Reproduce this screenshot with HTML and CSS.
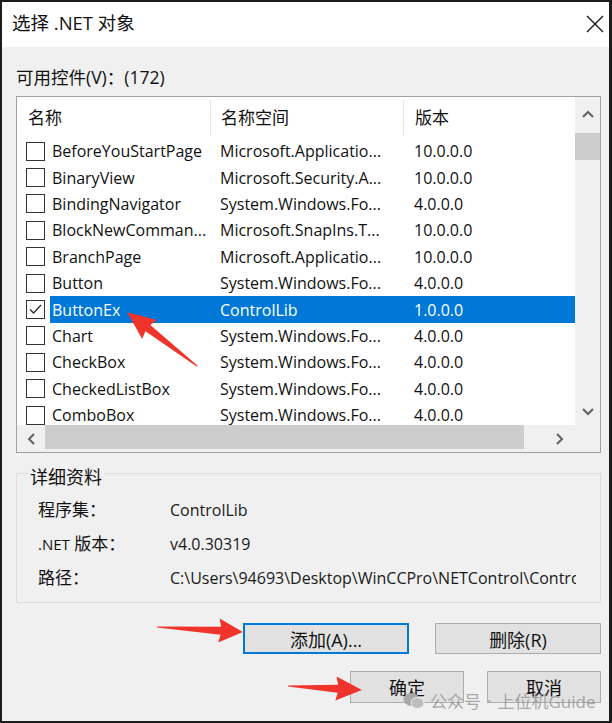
FILE: index.html
```html
<!DOCTYPE html>
<html lang="zh-CN">
<head>
    <meta charset="UTF-8">
    <meta name="viewport" content="width=device-width, initial-scale=1.0">
    <title>选择 .NET 对象</title>
    <link rel="stylesheet" href="styles.css">
</head>
<body>
    <div class="window">
        <div class="titlebar">
            <span class="title">选择 .NET 对象</span>
            <svg class="close" width="18" height="18" viewBox="0 0 18 18">
                <path d="M1 1 L17 17 M17 1 L1 17" stroke="#1a1a1a" stroke-width="1.4" fill="none"/>
            </svg>
        </div>

        <div class="client">
            <div class="list-label">可用控件(V)：(172)</div>

            <div class="listbox">
                <div class="list-main">
                    <div class="list-view">
                        <div class="list-head">
                            <div class="hcell h1">名称</div>
                            <div class="hcell h2">名称空间</div>
                            <div class="hcell h3">版本</div>
                        </div>
                        <div class="list-rows">
                            <div class="row"><span class="check"></span><div class="cells"><span class="c1">BeforeYouStartPage</span><span class="c2">Microsoft.Applicatio...</span><span class="c3">10.0.0.0</span></div></div>
                            <div class="row"><span class="check"></span><div class="cells"><span class="c1">BinaryView</span><span class="c2">Microsoft.Security.A...</span><span class="c3">10.0.0.0</span></div></div>
                            <div class="row"><span class="check"></span><div class="cells"><span class="c1">BindingNavigator</span><span class="c2">System.Windows.Fo...</span><span class="c3">4.0.0.0</span></div></div>
                            <div class="row"><span class="check"></span><div class="cells"><span class="c1">BlockNewComman...</span><span class="c2">Microsoft.SnapIns.T...</span><span class="c3">10.0.0.0</span></div></div>
                            <div class="row"><span class="check"></span><div class="cells"><span class="c1">BranchPage</span><span class="c2">Microsoft.Applicatio...</span><span class="c3">10.0.0.0</span></div></div>
                            <div class="row"><span class="check"></span><div class="cells"><span class="c1">Button</span><span class="c2">System.Windows.Fo...</span><span class="c3">4.0.0.0</span></div></div>
                            <div class="row"><span class="check checked"><svg width="17" height="17" viewBox="0 0 17 17"><path d="M3 8.5 L6.6 12 L14 4" stroke="#2b2b2b" stroke-width="1.3" fill="none"/></svg></span><div class="cells selected"><span class="c1">ButtonEx</span><span class="c2">ControlLib</span><span class="c3">1.0.0.0</span></div></div>
                            <div class="row"><span class="check"></span><div class="cells"><span class="c1">Chart</span><span class="c2">System.Windows.Fo...</span><span class="c3">4.0.0.0</span></div></div>
                            <div class="row"><span class="check"></span><div class="cells"><span class="c1">CheckBox</span><span class="c2">System.Windows.Fo...</span><span class="c3">4.0.0.0</span></div></div>
                            <div class="row"><span class="check"></span><div class="cells"><span class="c1">CheckedListBox</span><span class="c2">System.Windows.Fo...</span><span class="c3">4.0.0.0</span></div></div>
                            <div class="row"><span class="check"></span><div class="cells"><span class="c1">ComboBox</span><span class="c2">System.Windows.Fo...</span><span class="c3">4.0.0.0</span></div></div>
                        </div>
                    </div>
                    <div class="vscroll">
                        <div class="sb-btn v-up">
                            <svg width="12" height="8" viewBox="0 0 12 8"><path d="M1 7 L6 2 L11 7" stroke="#606060" stroke-width="2" fill="none"/></svg>
                        </div>
                        <div class="v-thumb"></div>
                        <div class="sb-track"></div>
                        <div class="sb-btn v-down">
                            <svg width="12" height="8" viewBox="0 0 12 8"><path d="M1 1 L6 6 L11 1" stroke="#606060" stroke-width="2" fill="none"/></svg>
                        </div>
                    </div>
                </div>
                <div class="hscroll">
                    <div class="sb-btn h-left">
                        <svg width="8" height="12" viewBox="0 0 8 12"><path d="M7 1 L2 6 L7 11" stroke="#606060" stroke-width="2" fill="none"/></svg>
                    </div>
                    <div class="h-thumb"></div>
                    <div class="sb-track"></div>
                    <div class="sb-btn h-right">
                        <svg width="8" height="12" viewBox="0 0 8 12"><path d="M1 1 L6 6 L1 11" stroke="#606060" stroke-width="2" fill="none"/></svg>
                    </div>
                    <div class="corner"></div>
                </div>
            </div>

            <fieldset class="details">
                <legend>详细资料</legend>
                <div class="info">
                    <span class="info-key">程序集：</span><span class="info-val">ControlLib</span>
                    <span class="info-key"><span class="net">.NET</span> 版本：</span><span class="info-val">v4.0.30319</span>
                    <span class="info-key">路径：</span><span class="info-val">C:\Users\94693\Desktop\WinCCPro\NETControl\ControlLib\bin\Debug\ControlLib.dll</span>
                </div>
            </fieldset>

            <div class="btn-row first">
                <button class="btn wide focused">添加(A)...</button>
                <button class="btn wide">删除(R)</button>
            </div>
            <div class="btn-row second">
                <button class="btn narrow">确定</button>
                <button class="btn narrow">取消</button>
            </div>
        </div>

        <!-- red pointer marks drawn over the dialog -->
        <svg class="marks" width="612" height="723" viewBox="0 0 612 723">
            <g fill="#f0342b">
                <polygon transform="translate(197 366) rotate(217.6)" points="0,-0.6 62,-4 60,-12 88,0 60,12 62,4 0,0.6"/>
                <polygon transform="translate(157 627) rotate(3.3)" points="0,-0.6 64,-4 62,-12 86,0 62,12 64,4 0,0.6"/>
                <polygon transform="translate(288 686) rotate(3.1)" points="0,-0.6 50,-4 48,-12 74,0 48,12 50,4 0,0.6"/>
            </g>
        </svg>

        <div class="watermark">
            <svg width="22" height="18" viewBox="0 0 22 18">
                <ellipse cx="8.5" cy="7.5" rx="8" ry="6.5" fill="#a8a8a8"/>
                <ellipse cx="14.5" cy="11" rx="6.5" ry="5.5" fill="#bdbdbd" stroke="#f0f0f0" stroke-width="1"/>
            </svg>
            <span>公众号</span><span class="dot">·</span><span>上位机Guide</span>
        </div>
    </div>
</body>
</html>
```

FILE: styles.css
```css
* {
    box-sizing: border-box;
}
body {
    margin: 0;
    font-family: "Open Sans", "Noto Sans CJK SC", sans-serif;
    color: #111;
}
.window {
    position: relative;
    width: 612px;
    height: 723px;
    border: 2px solid #1c1c1c;
    border-right-width: 3px;
    background: #f0f0f0;
    overflow: hidden;
}
.titlebar {
    height: 45px;
    background: #fff;
    display: flex;
    justify-content: space-between;
    align-items: flex-start;
    padding: 11px 5px 0 10px;
}
.title {
    font-size: 18.5px;
    line-height: 20px;
}
.close {
    margin-top: 2px;
}
.client {
    padding: 0 8px 0 14px;
}
.list-label {
    margin-top: 20px;
    font-size: 17.5px;
    line-height: 20px;
}

/* list view */
.listbox {
    margin-top: 9px;
    height: 357px;
    border: 1px solid #a0a0a0;
    background: #fff;
    display: flex;
    flex-direction: column;
}
.list-main {
    height: 328px;
    display: flex;
}
.list-view {
    flex: 1;
    overflow: hidden;
}
.list-head {
    height: 41px;
    display: flex;
    font-size: 17px;
}
.hcell {
    margin-top: 3px;
    height: 36px;
    line-height: 36px;
    padding-left: 11px;
}
.h1 {
    width: 193px;
}
.h2 {
    width: 193px;
    padding-left: 10px;
    border-left: 1px solid #e5e5e5;
}
.h3 {
    flex: 1;
    border-left: 1px solid #e5e5e5;
}
.row {
    height: 26.4px;
    display: flex;
    align-items: center;
    padding-left: 9px;
    font-size: 16px;
}
.check {
    width: 19px;
    height: 19px;
    border: 1.5px solid #333;
    background: #fff;
    margin-right: 5px;
    display: flex;
    align-items: center;
    justify-content: center;
    flex: none;
}
.cells {
    flex: 1;
    height: 100%;
    display: flex;
    align-items: center;
    white-space: nowrap;
}
.cells.selected {
    background: #0078d7;
    color: #fff;
}
.c1 {
    width: 160px;
    padding-left: 2px;
}
.c2 {
    width: 193px;
    padding-left: 10px;
}
.c3 {
    padding-left: 11px;
}

/* scroll bars */
.vscroll {
    width: 25px;
    background: #f0f0f0;
    display: flex;
    flex-direction: column;
}
.sb-btn {
    display: flex;
    align-items: center;
    justify-content: center;
}
.v-up {
    height: 33px;
}
.v-thumb {
    height: 27px;
    margin: 3px 0 0;
    background: #cdcdcd;
}
.sb-track {
    flex: 1;
}
.v-down {
    height: 26px;
}
.hscroll {
    height: 27px;
    display: flex;
    background: #f0f0f0;
}
.h-left {
    width: 28px;
}
.h-thumb {
    width: 479px;
    margin: 0 0 3px;
    background: #cdcdcd;
}
.h-right {
    width: 30px;
}
.corner {
    width: 25px;
}

/* details group */
.details {
    margin: 6px 0 0;
    padding: 6px 0 7px 21px;
    border: 1px solid #dcdcdc;
    min-inline-size: 0;
}
.details legend {
    margin-left: -10px;
    padding: 8px 2px 0;
    font-size: 18px;
    line-height: 20px;
}
.info {
    display: grid;
    grid-template-columns: 132px 406px;
    font-size: 16px;
    line-height: 34px;
}
.info-key {
    font-size: 17px;
}
.net {
    font-size: 15px;
}
.info-val {
    white-space: nowrap;
    overflow: hidden;
    color: #1a1a1a;
}

/* buttons */
.btn-row {
    display: flex;
    justify-content: flex-end;
}
.btn-row.first {
    margin-top: 20px;
    gap: 26px;
}
.btn-row.second {
    margin-top: 17px;
    gap: 23px;
}
.btn {
    font-family: inherit;
    font-size: 18px;
    color: #111;
    background: #e1e1e1;
    border: 1px solid #adadad;
    padding: 0;
}
.btn.wide {
    width: 166px;
    height: 31px;
}
.btn.narrow {
    width: 114px;
    height: 32px;
}
.btn.focused {
    border: 2px solid #0078d7;
}

/* overlays */
.marks {
    position: absolute;
    left: -2px;
    top: -2px;
    pointer-events: none;
}
.watermark {
    position: absolute;
    left: 401px;
    top: 686px;
    display: flex;
    align-items: center;
    white-space: nowrap;
    font-size: 17px;
    color: rgba(140, 140, 140, 0.75);
    pointer-events: none;
}
.watermark svg {
    margin-right: 5px;
}
.watermark .dot {
    margin: 0 6px;
}
```
